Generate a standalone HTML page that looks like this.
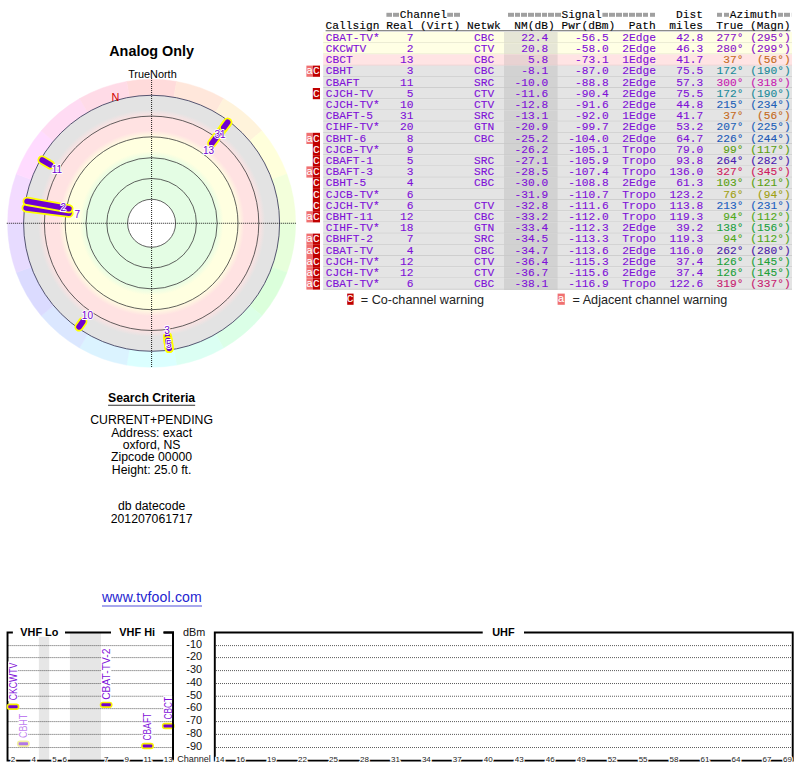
<!DOCTYPE html><html><head><meta charset="utf-8"><style>
html,body{margin:0;padding:0;background:#fff;width:800px;height:768px;overflow:hidden}
#root{position:absolute;left:0;top:0;width:1000px;height:960px;transform:scale(0.8);transform-origin:0 0;font-family:"Liberation Sans",sans-serif}
.a{position:absolute;white-space:pre}
.m{font-family:"Liberation Mono",monospace;font-size:14px;line-height:14px;-webkit-text-stroke:0.15px currentColor}
.c{text-align:center}
</style></head><body><div id="root">
<div class="a m" style="left:407.0px;top:11.3px;color:#000;letter-spacing:0.02px">           Channel                 Signal           Dist    Azimuth  
Callsign Real (Virt) Netwk  NM(dB) Pwr(dBm)  Path  miles  True (Magn)</div><div class="a" style="left:483.48px;top:16.3px;width:16.84px;height:5.2px;background:linear-gradient(to bottom,transparent 42%,rgba(255,255,255,.55) 42% 58%,transparent 58%),repeating-linear-gradient(to right,#a0a0a0 0 7.1px,transparent 7.1px 8.42px)"></div><div class="a" style="left:559.26px;top:16.3px;width:16.84px;height:5.2px;background:linear-gradient(to bottom,transparent 42%,rgba(255,255,255,.55) 42% 58%,transparent 58%),repeating-linear-gradient(to right,#a0a0a0 0 7.1px,transparent 7.1px 8.42px)"></div><div class="a" style="left:635.04px;top:16.3px;width:67.36px;height:5.2px;background:linear-gradient(to bottom,transparent 42%,rgba(255,255,255,.55) 42% 58%,transparent 58%),repeating-linear-gradient(to right,#a0a0a0 0 7.1px,transparent 7.1px 8.42px)"></div><div class="a" style="left:752.92px;top:16.3px;width:67.36px;height:5.2px;background:linear-gradient(to bottom,transparent 42%,rgba(255,255,255,.55) 42% 58%,transparent 58%),repeating-linear-gradient(to right,#a0a0a0 0 7.1px,transparent 7.1px 8.42px)"></div><div class="a" style="left:896.06px;top:16.3px;width:16.84px;height:5.2px;background:linear-gradient(to bottom,transparent 42%,rgba(255,255,255,.55) 42% 58%,transparent 58%),repeating-linear-gradient(to right,#a0a0a0 0 7.1px,transparent 7.1px 8.42px)"></div><div class="a" style="left:971.84px;top:16.3px;width:16.84px;height:5.2px;background:linear-gradient(to bottom,transparent 42%,rgba(255,255,255,.55) 42% 58%,transparent 58%),repeating-linear-gradient(to right,#a0a0a0 0 7.1px,transparent 7.1px 8.42px)"></div><div class="a" style="left:407px;top:37.6px;width:581px;height:1px;background:#404040"></div><div class="a" style="left:404.4px;top:40px;width:585.7px;height:13px;background:#ffffe4;border-bottom:1px solid #e0e0c8"></div><div class="a" style="left:630.1px;top:40px;width:67.1px;height:13px;background:#e6e6d6;border-bottom:1px solid #e0e0c8"></div><div class="a m" style="left:407.3px;top:40.4px;color:#7f10d8;letter-spacing:0.02px">CBAT-TV*    7         CBC    22.4    -56.5  2Edge   42.8  <span style="color:#8a10c8">277° (295°)</span></div><div class="a" style="left:404.4px;top:54px;width:585.7px;height:13px;background:#ffffe4;border-bottom:1px solid #e0e0c8"></div><div class="a" style="left:630.1px;top:54px;width:67.1px;height:13px;background:#e6e6d6;border-bottom:1px solid #e0e0c8"></div><div class="a m" style="left:407.3px;top:54.4px;color:#7f10d8;letter-spacing:0.02px">CKCWTV      2         CTV    20.8    -58.0  2Edge   46.3  <span style="color:#8a10c8">280° (299°)</span></div><div class="a" style="left:404.4px;top:68px;width:585.7px;height:13px;background:#ffe4e4;border-bottom:1px solid #e6c8c8"></div><div class="a" style="left:630.1px;top:68px;width:67.1px;height:13px;background:#e8d2d2;border-bottom:1px solid #e6c8c8"></div><div class="a m" style="left:407.3px;top:68.4px;color:#7f10d8;letter-spacing:0.02px">CBCT       13         CBC     5.8    -73.1  1Edge   41.7  <span style="color:#c46a20"> 37°  (56°)</span></div><div class="a" style="left:404.4px;top:82px;width:585.7px;height:13px;background:#e4e4e4;border-bottom:1px solid #c8c8c8"></div><div class="a" style="left:630.1px;top:82px;width:67.1px;height:13px;background:#d2d2d2;border-bottom:1px solid #c8c8c8"></div><div class="a m" style="left:407.3px;top:82.4px;color:#7f10d8;letter-spacing:0.02px">CBHT        3         CBC    -8.1    -87.0  2Edge   75.5  <span style="color:#1a8a9a">172° (190°)</span></div><div class="a m" style="left:382.8px;top:82px;width:8.3px;height:14px;background:#f07070;color:#fff;text-align:center">a</div><div class="a m" style="left:391.1px;top:82px;width:8.8px;height:14px;background:#c00000;color:#fff;text-align:center">C</div><div class="a" style="left:404.4px;top:96px;width:585.7px;height:13px;background:#e4e4e4;border-bottom:1px solid #c8c8c8"></div><div class="a" style="left:630.1px;top:96px;width:67.1px;height:13px;background:#d2d2d2;border-bottom:1px solid #c8c8c8"></div><div class="a m" style="left:407.3px;top:96.4px;color:#7f10d8;letter-spacing:0.02px">CBAFT      11         SRC   -10.0    -88.8  2Edge   57.3  <span style="color:#c81ab0">300° (318°)</span></div><div class="a" style="left:404.4px;top:110px;width:585.7px;height:13px;background:#e4e4e4;border-bottom:1px solid #c8c8c8"></div><div class="a" style="left:630.1px;top:110px;width:67.1px;height:13px;background:#d2d2d2;border-bottom:1px solid #c8c8c8"></div><div class="a m" style="left:407.3px;top:110.4px;color:#7f10d8;letter-spacing:0.02px">CJCH-TV     5         CTV   -11.6    -90.4  2Edge   75.5  <span style="color:#1a8a9a">172° (190°)</span></div><div class="a m" style="left:391.1px;top:110px;width:8.8px;height:14px;background:#c00000;color:#fff;text-align:center">C</div><div class="a" style="left:404.4px;top:124px;width:585.7px;height:13px;background:#e4e4e4;border-bottom:1px solid #c8c8c8"></div><div class="a" style="left:630.1px;top:124px;width:67.1px;height:13px;background:#d2d2d2;border-bottom:1px solid #c8c8c8"></div><div class="a m" style="left:407.3px;top:124.4px;color:#7f10d8;letter-spacing:0.02px">CJCH-TV*   10         CTV   -12.8    -91.6  2Edge   44.8  <span style="color:#2060b8">215° (234°)</span></div><div class="a" style="left:404.4px;top:138px;width:585.7px;height:13px;background:#e4e4e4;border-bottom:1px solid #c8c8c8"></div><div class="a" style="left:630.1px;top:138px;width:67.1px;height:13px;background:#d2d2d2;border-bottom:1px solid #c8c8c8"></div><div class="a m" style="left:407.3px;top:138.4px;color:#7f10d8;letter-spacing:0.02px">CBAFT-5    31         SRC   -13.1    -92.0  1Edge   41.7  <span style="color:#c46a20"> 37°  (56°)</span></div><div class="a" style="left:404.4px;top:152px;width:585.7px;height:13px;background:#e4e4e4;border-bottom:1px solid #c8c8c8"></div><div class="a" style="left:630.1px;top:152px;width:67.1px;height:13px;background:#d2d2d2;border-bottom:1px solid #c8c8c8"></div><div class="a m" style="left:407.3px;top:152.4px;color:#7f10d8;letter-spacing:0.02px">CIHF-TV*   20         GTN   -20.9    -99.7  2Edge   53.2  <span style="color:#2060b8">207° (225°)</span></div><div class="a" style="left:404.4px;top:166px;width:585.7px;height:13px;background:#e4e4e4;border-bottom:1px solid #c8c8c8"></div><div class="a" style="left:630.1px;top:166px;width:67.1px;height:13px;background:#d2d2d2;border-bottom:1px solid #c8c8c8"></div><div class="a m" style="left:407.3px;top:166.4px;color:#7f10d8;letter-spacing:0.02px">CBHT-6      8         CBC   -25.2   -104.0  2Edge   64.7  <span style="color:#2058b8">226° (244°)</span></div><div class="a m" style="left:382.8px;top:166px;width:8.3px;height:14px;background:#f07070;color:#fff;text-align:center">a</div><div class="a m" style="left:391.1px;top:166px;width:8.8px;height:14px;background:#c00000;color:#fff;text-align:center">C</div><div class="a" style="left:404.4px;top:180px;width:585.7px;height:13px;background:#e4e4e4;border-bottom:1px solid #c8c8c8"></div><div class="a" style="left:630.1px;top:180px;width:67.1px;height:13px;background:#d2d2d2;border-bottom:1px solid #c8c8c8"></div><div class="a m" style="left:407.3px;top:180.4px;color:#7f10d8;letter-spacing:0.02px">CJCB-TV*    9               -26.2   -105.1  Tropo   79.0  <span style="color:#5aa010"> 99° (117°)</span></div><div class="a m" style="left:391.1px;top:180px;width:8.8px;height:14px;background:#c00000;color:#fff;text-align:center">C</div><div class="a" style="left:404.4px;top:194px;width:585.7px;height:13px;background:#e4e4e4;border-bottom:1px solid #c8c8c8"></div><div class="a" style="left:630.1px;top:194px;width:67.1px;height:13px;background:#d2d2d2;border-bottom:1px solid #c8c8c8"></div><div class="a m" style="left:407.3px;top:194.4px;color:#7f10d8;letter-spacing:0.02px">CBAFT-1     5         SRC   -27.1   -105.9  Tropo   93.8  <span style="color:#4a20b0">264° (282°)</span></div><div class="a m" style="left:391.1px;top:194px;width:8.8px;height:14px;background:#c00000;color:#fff;text-align:center">C</div><div class="a" style="left:404.4px;top:208px;width:585.7px;height:13px;background:#e4e4e4;border-bottom:1px solid #c8c8c8"></div><div class="a" style="left:630.1px;top:208px;width:67.1px;height:13px;background:#d2d2d2;border-bottom:1px solid #c8c8c8"></div><div class="a m" style="left:407.3px;top:208.4px;color:#7f10d8;letter-spacing:0.02px">CBAFT-3     3         SRC   -28.5   -107.4  Tropo  136.0  <span style="color:#d01a60">327° (345°)</span></div><div class="a m" style="left:382.8px;top:208px;width:8.3px;height:14px;background:#f07070;color:#fff;text-align:center">a</div><div class="a m" style="left:391.1px;top:208px;width:8.8px;height:14px;background:#c00000;color:#fff;text-align:center">C</div><div class="a" style="left:404.4px;top:222px;width:585.7px;height:13px;background:#e4e4e4;border-bottom:1px solid #c8c8c8"></div><div class="a" style="left:630.1px;top:222px;width:67.1px;height:13px;background:#d2d2d2;border-bottom:1px solid #c8c8c8"></div><div class="a m" style="left:407.3px;top:222.4px;color:#7f10d8;letter-spacing:0.02px">CBHT-5      4         CBC   -30.0   -108.8  2Edge   61.3  <span style="color:#5aa010">103° (121°)</span></div><div class="a m" style="left:391.1px;top:222px;width:8.8px;height:14px;background:#c00000;color:#fff;text-align:center">C</div><div class="a" style="left:404.4px;top:236px;width:585.7px;height:13px;background:#e4e4e4;border-bottom:1px solid #c8c8c8"></div><div class="a" style="left:630.1px;top:236px;width:67.1px;height:13px;background:#d2d2d2;border-bottom:1px solid #c8c8c8"></div><div class="a m" style="left:407.3px;top:236.4px;color:#7f10d8;letter-spacing:0.02px">CJCB-TV*    6               -31.9   -110.7  Tropo  123.2  <span style="color:#a0a010"> 76°  (94°)</span></div><div class="a m" style="left:391.1px;top:236px;width:8.8px;height:14px;background:#c00000;color:#fff;text-align:center">C</div><div class="a" style="left:404.4px;top:250px;width:585.7px;height:13px;background:#e4e4e4;border-bottom:1px solid #c8c8c8"></div><div class="a" style="left:630.1px;top:250px;width:67.1px;height:13px;background:#d2d2d2;border-bottom:1px solid #c8c8c8"></div><div class="a m" style="left:407.3px;top:250.4px;color:#7f10d8;letter-spacing:0.02px">CJCH-TV*    6         CTV   -32.8   -111.6  Tropo  113.8  <span style="color:#2060c0">213° (231°)</span></div><div class="a m" style="left:391.1px;top:250px;width:8.8px;height:14px;background:#c00000;color:#fff;text-align:center">C</div><div class="a" style="left:404.4px;top:264px;width:585.7px;height:13px;background:#e4e4e4;border-bottom:1px solid #c8c8c8"></div><div class="a" style="left:630.1px;top:264px;width:67.1px;height:13px;background:#d2d2d2;border-bottom:1px solid #c8c8c8"></div><div class="a m" style="left:407.3px;top:264.4px;color:#7f10d8;letter-spacing:0.02px">CBHT-11    12         CBC   -33.2   -112.0  Tropo  119.3  <span style="color:#50a818"> 94° (112°)</span></div><div class="a m" style="left:382.8px;top:264px;width:8.3px;height:14px;background:#f07070;color:#fff;text-align:center">a</div><div class="a m" style="left:391.1px;top:264px;width:8.8px;height:14px;background:#c00000;color:#fff;text-align:center">C</div><div class="a" style="left:404.4px;top:278px;width:585.7px;height:13px;background:#e4e4e4;border-bottom:1px solid #c8c8c8"></div><div class="a" style="left:630.1px;top:278px;width:67.1px;height:13px;background:#d2d2d2;border-bottom:1px solid #c8c8c8"></div><div class="a m" style="left:407.3px;top:278.4px;color:#7f10d8;letter-spacing:0.02px">CIHF-TV*   18         GTN   -33.4   -112.3  2Edge   39.2  <span style="color:#20a040">138° (156°)</span></div><div class="a" style="left:404.4px;top:292px;width:585.7px;height:13px;background:#e4e4e4;border-bottom:1px solid #c8c8c8"></div><div class="a" style="left:630.1px;top:292px;width:67.1px;height:13px;background:#d2d2d2;border-bottom:1px solid #c8c8c8"></div><div class="a m" style="left:407.3px;top:292.4px;color:#7f10d8;letter-spacing:0.02px">CBHFT-2     7         SRC   -34.5   -113.3  Tropo  119.3  <span style="color:#50a818"> 94° (112°)</span></div><div class="a m" style="left:382.8px;top:292px;width:8.3px;height:14px;background:#f07070;color:#fff;text-align:center">a</div><div class="a m" style="left:391.1px;top:292px;width:8.8px;height:14px;background:#c00000;color:#fff;text-align:center">C</div><div class="a" style="left:404.4px;top:306px;width:585.7px;height:13px;background:#e4e4e4;border-bottom:1px solid #c8c8c8"></div><div class="a" style="left:630.1px;top:306px;width:67.1px;height:13px;background:#d2d2d2;border-bottom:1px solid #c8c8c8"></div><div class="a m" style="left:407.3px;top:306.4px;color:#7f10d8;letter-spacing:0.02px">CBAT-TV     4         CBC   -34.7   -113.6  2Edge  116.0  <span style="color:#4a20a8">262° (280°)</span></div><div class="a m" style="left:382.8px;top:306px;width:8.3px;height:14px;background:#f07070;color:#fff;text-align:center">a</div><div class="a m" style="left:391.1px;top:306px;width:8.8px;height:14px;background:#c00000;color:#fff;text-align:center">C</div><div class="a" style="left:404.4px;top:320px;width:585.7px;height:13px;background:#e4e4e4;border-bottom:1px solid #c8c8c8"></div><div class="a" style="left:630.1px;top:320px;width:67.1px;height:13px;background:#d2d2d2;border-bottom:1px solid #c8c8c8"></div><div class="a m" style="left:407.3px;top:320.4px;color:#7f10d8;letter-spacing:0.02px">CJCH-TV*   12         CTV   -36.4   -115.3  2Edge   37.4  <span style="color:#20a038">126° (145°)</span></div><div class="a m" style="left:382.8px;top:320px;width:8.3px;height:14px;background:#f07070;color:#fff;text-align:center">a</div><div class="a m" style="left:391.1px;top:320px;width:8.8px;height:14px;background:#c00000;color:#fff;text-align:center">C</div><div class="a" style="left:404.4px;top:334px;width:585.7px;height:13px;background:#e4e4e4;border-bottom:1px solid #c8c8c8"></div><div class="a" style="left:630.1px;top:334px;width:67.1px;height:13px;background:#d2d2d2;border-bottom:1px solid #c8c8c8"></div><div class="a m" style="left:407.3px;top:334.4px;color:#7f10d8;letter-spacing:0.02px">CJCH-TV*   12         CTV   -36.7   -115.6  2Edge   37.4  <span style="color:#20a038">126° (145°)</span></div><div class="a m" style="left:382.8px;top:334px;width:8.3px;height:14px;background:#f07070;color:#fff;text-align:center">a</div><div class="a m" style="left:391.1px;top:334px;width:8.8px;height:14px;background:#c00000;color:#fff;text-align:center">C</div><div class="a" style="left:404.4px;top:348px;width:585.7px;height:13px;background:#e4e4e4;border-bottom:1px solid #c8c8c8"></div><div class="a" style="left:630.1px;top:348px;width:67.1px;height:13px;background:#d2d2d2;border-bottom:1px solid #c8c8c8"></div><div class="a m" style="left:407.3px;top:348.4px;color:#7f10d8;letter-spacing:0.02px">CBAT-TV*    6         CBC   -38.1   -116.9  Tropo  122.6  <span style="color:#c81a70">319° (337°)</span></div><div class="a m" style="left:382.8px;top:348px;width:8.3px;height:14px;background:#f07070;color:#fff;text-align:center">a</div><div class="a m" style="left:391.1px;top:348px;width:8.8px;height:14px;background:#c00000;color:#fff;text-align:center">C</div><div class="a m" style="left:433.5px;top:366.8px;width:8.4px;height:14px;background:#c00000;color:#fff;text-align:center">C</div><div class="a" style="left:451px;top:365.8px;font-size:15.8px;line-height:18px;color:#222">= Co-channel warning</div><div class="a m" style="left:697px;top:366.8px;width:9px;height:14px;background:#f07070;color:#fff;text-align:center">a</div><div class="a" style="left:715.6px;top:365.8px;font-size:15.8px;line-height:18px;color:#222">= Adjacent channel warning</div><div class="a c" style="left:-10.5px;width:400px;top:53.51px;font-size:18px;line-height:20.7px;font-weight:bold;">Analog Only</div><div class="a c" style="left:-9.5px;width:400px;top:84.72px;font-size:13.6px;line-height:15.639999999999999px;">TrueNorth</div><div class="a c" style="left:-10.5px;width:400px;top:488.30px;font-size:15.3px;line-height:17.595px;font-weight:bold;"><u style="text-decoration-thickness:1.3px;text-underline-offset:3.5px">Search Criteria</u></div><div class="a c" style="left:-10.5px;width:400px;top:516.40px;font-size:15.3px;line-height:17.595px;">CURRENT+PENDING</div><div class="a c" style="left:-10.5px;width:400px;top:532.15px;font-size:15.3px;line-height:17.595px;">Address: exact</div><div class="a c" style="left:-10.5px;width:400px;top:547.30px;font-size:15.3px;line-height:17.595px;">oxford, NS</div><div class="a c" style="left:-10.5px;width:400px;top:562.20px;font-size:15.3px;line-height:17.595px;">Zipcode 00000</div><div class="a c" style="left:-10.5px;width:400px;top:578.40px;font-size:15.3px;line-height:17.595px;">Height: 25.0 ft.</div><div class="a c" style="left:-10.5px;width:400px;top:623.50px;font-size:15.3px;line-height:17.595px;">db datecode</div><div class="a c" style="left:-10.5px;width:400px;top:639.70px;font-size:15.3px;line-height:17.595px;">201207061717</div><div class="a c" style="left:-10px;width:400px;top:736.78px;font-size:17.6px;line-height:20.24px;color:#2424d0;letter-spacing:0.2px;"><u style="text-underline-offset:3.5px">www.tvfool.com</u></div><svg class="a" style="left:0;top:0" width="380" height="480" viewBox="0 0 380 480"><defs><radialGradient id="bands" gradientUnits="userSpaceOnUse" cx="189.5" cy="279.1" r="160"><stop offset="0.0000" stop-color="#ffffff"/><stop offset="0.1875" stop-color="#ffffff"/><stop offset="0.1876" stop-color="#e4fde4"/><stop offset="0.5062" stop-color="#e4fde4"/><stop offset="0.5625" stop-color="#ffffe0"/><stop offset="0.6687" stop-color="#ffffe0"/><stop offset="0.7250" stop-color="#ffe2e2"/><stop offset="0.8313" stop-color="#ffe2e2"/><stop offset="0.8875" stop-color="#e3e3e3"/><stop offset="1.0000" stop-color="#e3e3e3"/></radialGradient></defs><path d="M158.24,101.83 A180,180 0 0 1 220.76,101.83 L217.20,122.02 A159.5,159.5 0 0 0 161.80,122.02Z" fill="hsl(0,100%,93%)" stroke="hsl(0,100%,93%)" stroke-width="0.6"/><path d="M220.76,101.83 A180,180 0 0 1 279.50,123.22 L269.25,140.97 A159.5,159.5 0 0 0 217.20,122.02Z" fill="hsl(20,100%,93%)" stroke="hsl(20,100%,93%)" stroke-width="0.6"/><path d="M279.50,123.22 A180,180 0 0 1 327.39,163.40 L311.68,176.58 A159.5,159.5 0 0 0 269.25,140.97Z" fill="hsl(40,100%,93%)" stroke="hsl(40,100%,93%)" stroke-width="0.6"/><path d="M327.39,163.40 A180,180 0 0 1 358.64,217.54 L339.38,224.55 A159.5,159.5 0 0 0 311.68,176.58Z" fill="hsl(60,100%,93%)" stroke="hsl(60,100%,93%)" stroke-width="0.6"/><path d="M358.64,217.54 A180,180 0 0 1 369.50,279.10 L349.00,279.10 A159.5,159.5 0 0 0 339.38,224.55Z" fill="hsl(80,100%,93%)" stroke="hsl(80,100%,93%)" stroke-width="0.6"/><path d="M369.50,279.10 A180,180 0 0 1 358.64,340.66 L339.38,333.65 A159.5,159.5 0 0 0 349.00,279.10Z" fill="hsl(100,100%,93%)" stroke="hsl(100,100%,93%)" stroke-width="0.6"/><path d="M358.64,340.66 A180,180 0 0 1 327.39,394.80 L311.68,381.62 A159.5,159.5 0 0 0 339.38,333.65Z" fill="hsl(120,100%,93%)" stroke="hsl(120,100%,93%)" stroke-width="0.6"/><path d="M327.39,394.80 A180,180 0 0 1 279.50,434.98 L269.25,417.23 A159.5,159.5 0 0 0 311.68,381.62Z" fill="hsl(140,100%,93%)" stroke="hsl(140,100%,93%)" stroke-width="0.6"/><path d="M279.50,434.98 A180,180 0 0 1 220.76,456.37 L217.20,436.18 A159.5,159.5 0 0 0 269.25,417.23Z" fill="hsl(160,100%,93%)" stroke="hsl(160,100%,93%)" stroke-width="0.6"/><path d="M220.76,456.37 A180,180 0 0 1 158.24,456.37 L161.80,436.18 A159.5,159.5 0 0 0 217.20,436.18Z" fill="hsl(180,100%,93%)" stroke="hsl(180,100%,93%)" stroke-width="0.6"/><path d="M158.24,456.37 A180,180 0 0 1 99.50,434.98 L109.75,417.23 A159.5,159.5 0 0 0 161.80,436.18Z" fill="hsl(200,100%,93%)" stroke="hsl(200,100%,93%)" stroke-width="0.6"/><path d="M99.50,434.98 A180,180 0 0 1 51.61,394.80 L67.32,381.62 A159.5,159.5 0 0 0 109.75,417.23Z" fill="hsl(220,100%,93%)" stroke="hsl(220,100%,93%)" stroke-width="0.6"/><path d="M51.61,394.80 A180,180 0 0 1 20.36,340.66 L39.62,333.65 A159.5,159.5 0 0 0 67.32,381.62Z" fill="hsl(240,100%,93%)" stroke="hsl(240,100%,93%)" stroke-width="0.6"/><path d="M20.36,340.66 A180,180 0 0 1 9.50,279.10 L30.00,279.10 A159.5,159.5 0 0 0 39.62,333.65Z" fill="hsl(260,100%,93%)" stroke="hsl(260,100%,93%)" stroke-width="0.6"/><path d="M9.50,279.10 A180,180 0 0 1 20.36,217.54 L39.62,224.55 A159.5,159.5 0 0 0 30.00,279.10Z" fill="hsl(280,100%,93%)" stroke="hsl(280,100%,93%)" stroke-width="0.6"/><path d="M20.36,217.54 A180,180 0 0 1 51.61,163.40 L67.32,176.58 A159.5,159.5 0 0 0 39.62,224.55Z" fill="hsl(300,100%,93%)" stroke="hsl(300,100%,93%)" stroke-width="0.6"/><path d="M51.61,163.40 A180,180 0 0 1 99.50,123.22 L109.75,140.97 A159.5,159.5 0 0 0 67.32,176.58Z" fill="hsl(320,100%,93%)" stroke="hsl(320,100%,93%)" stroke-width="0.6"/><path d="M99.50,123.22 A180,180 0 0 1 158.24,101.83 L161.80,122.02 A159.5,159.5 0 0 0 109.75,140.97Z" fill="hsl(340,100%,93%)" stroke="hsl(340,100%,93%)" stroke-width="0.6"/><circle cx="189.5" cy="279.1" r="160" fill="url(#bands)"/><circle cx="189.5" cy="279.1" r="30" fill="none" stroke="#3a3a3a" stroke-width="1"/><circle cx="189.5" cy="279.1" r="56" fill="none" stroke="#3a3a3a" stroke-width="1"/><circle cx="189.5" cy="279.1" r="82" fill="none" stroke="#3a3a3a" stroke-width="1"/><circle cx="189.5" cy="279.1" r="108" fill="none" stroke="#3a3a3a" stroke-width="1"/><circle cx="189.5" cy="279.1" r="134" fill="none" stroke="#3a3a3a" stroke-width="1"/><circle cx="189.5" cy="279.1" r="160" fill="none" stroke="#404060" stroke-width="1.1"/><line x1="8.5" y1="279.1" x2="370" y2="279.1" stroke="#000" stroke-width="1.1" stroke-dasharray="1.25 1.25"/><line x1="189.5" y1="97.5" x2="189.5" y2="459" stroke="#000" stroke-width="1.1" stroke-dasharray="1.25 1.25"/><text x="144.4" y="126" font-size="13.6" fill="#d00000" text-anchor="middle" font-family="Liberation Sans">N</text><line x1="32.68" y1="259.84" x2="86.28" y2="266.43" stroke="#ffff00" stroke-width="11.6" stroke-linecap="round"/><line x1="32.68" y1="259.84" x2="86.28" y2="266.43" stroke="#7000d0" stroke-width="7.1" stroke-linecap="round"/><line x1="33.90" y1="251.66" x2="86.10" y2="260.87" stroke="#ffff00" stroke-width="11.6" stroke-linecap="round"/><line x1="33.90" y1="251.66" x2="86.10" y2="260.87" stroke="#7000d0" stroke-width="7.1" stroke-linecap="round"/><line x1="284.59" y1="152.92" x2="264.73" y2="179.27" stroke="#ffff00" stroke-width="11.6" stroke-linecap="round"/><line x1="284.59" y1="152.92" x2="264.73" y2="179.27" stroke="#7000d0" stroke-width="7.1" stroke-linecap="round"/><line x1="211.49" y1="435.56" x2="209.40" y2="420.71" stroke="#ffff00" stroke-width="11.6" stroke-linecap="round"/><line x1="211.49" y1="435.56" x2="209.40" y2="420.71" stroke="#7000d0" stroke-width="7.1" stroke-linecap="round"/><line x1="52.67" y1="200.10" x2="63.06" y2="206.10" stroke="#ffff00" stroke-width="11.6" stroke-linecap="round"/><line x1="52.67" y1="200.10" x2="63.06" y2="206.10" stroke="#7000d0" stroke-width="7.1" stroke-linecap="round"/><line x1="211.49" y1="435.56" x2="210.10" y2="425.66" stroke="#ffff00" stroke-width="11.6" stroke-linecap="round"/><line x1="211.49" y1="435.56" x2="210.10" y2="425.66" stroke="#7000d0" stroke-width="7.1" stroke-linecap="round"/><line x1="98.87" y1="408.53" x2="103.46" y2="401.97" stroke="#ffff00" stroke-width="11.6" stroke-linecap="round"/><line x1="98.87" y1="408.53" x2="103.46" y2="401.97" stroke="#7000d0" stroke-width="7.1" stroke-linecap="round"/><line x1="284.59" y1="152.92" x2="279.77" y2="159.30" stroke="#ffff00" stroke-width="11.6" stroke-linecap="round"/><line x1="284.59" y1="152.92" x2="279.77" y2="159.30" stroke="#7000d0" stroke-width="7.1" stroke-linecap="round"/><text x="275" y="172.0" font-size="12.5" fill="#7000d0" text-anchor="middle" font-family="Liberation Sans" stroke="#fff" stroke-width="2.2" paint-order="stroke" stroke-linejoin="round">31</text><text x="260.75" y="192.0" font-size="12.5" fill="#7000d0" text-anchor="middle" font-family="Liberation Sans" stroke="#fff" stroke-width="2.2" paint-order="stroke" stroke-linejoin="round">13</text><text x="71.25" y="215.8" font-size="12.5" fill="#7000d0" text-anchor="middle" font-family="Liberation Sans" stroke="#fff" stroke-width="2.2" paint-order="stroke" stroke-linejoin="round">11</text><text x="79.1" y="263.5" font-size="12.5" fill="#7000d0" text-anchor="middle" font-family="Liberation Sans" stroke="#fff" stroke-width="2.2" paint-order="stroke" stroke-linejoin="round">2</text><text x="96.75" y="272.3" font-size="12.5" fill="#7000d0" text-anchor="middle" font-family="Liberation Sans" stroke="#fff" stroke-width="2.2" paint-order="stroke" stroke-linejoin="round">7</text><text x="109.25" y="398.4" font-size="12.5" fill="#7000d0" text-anchor="middle" font-family="Liberation Sans" stroke="#fff" stroke-width="2.2" paint-order="stroke" stroke-linejoin="round">10</text><text x="208.75" y="417.0" font-size="12.5" fill="#7000d0" text-anchor="middle" font-family="Liberation Sans" stroke="#fff" stroke-width="2.2" paint-order="stroke" stroke-linejoin="round">3</text><text x="210.9" y="435.6" font-size="12.5" fill="#7000d0" text-anchor="middle" font-family="Liberation Sans" stroke="#fff" stroke-width="2.2" paint-order="stroke" stroke-linejoin="round">5</text></svg><svg class="a" style="left:0;top:770px" width="1000" height="190" viewBox="0 770 1000 190" font-family="Liberation Sans"><rect x="48.57" y="796" width="12.94" height="154" fill="#e6e6e6"/><rect x="87.39" y="791" width="38.82" height="159" fill="#e6e6e6"/><line x1="10.5" y1="807.00" x2="215" y2="807.00" stroke="#444" stroke-width="1.1" stroke-dasharray="1.25 1.25"/><line x1="270" y1="807.00" x2="990" y2="807.00" stroke="#444" stroke-width="1.1" stroke-dasharray="1.25 1.25"/><text x="252.5" y="810.40" font-size="13.6" text-anchor="end" fill="#111">-10</text><line x1="10.5" y1="822.00" x2="215" y2="822.00" stroke="#444" stroke-width="1.1" stroke-dasharray="1.25 1.25"/><line x1="270" y1="822.00" x2="990" y2="822.00" stroke="#444" stroke-width="1.1" stroke-dasharray="1.25 1.25"/><text x="252.5" y="825.40" font-size="13.6" text-anchor="end" fill="#111">-20</text><line x1="10.5" y1="838.25" x2="215" y2="838.25" stroke="#444" stroke-width="1.1" stroke-dasharray="1.25 1.25"/><line x1="270" y1="838.25" x2="990" y2="838.25" stroke="#444" stroke-width="1.1" stroke-dasharray="1.25 1.25"/><text x="252.5" y="841.65" font-size="13.6" text-anchor="end" fill="#111">-30</text><line x1="10.5" y1="854.40" x2="215" y2="854.40" stroke="#444" stroke-width="1.1" stroke-dasharray="1.25 1.25"/><line x1="270" y1="854.40" x2="990" y2="854.40" stroke="#444" stroke-width="1.1" stroke-dasharray="1.25 1.25"/><text x="252.5" y="857.80" font-size="13.6" text-anchor="end" fill="#111">-40</text><line x1="10.5" y1="870.30" x2="215" y2="870.30" stroke="#444" stroke-width="1.1" stroke-dasharray="1.25 1.25"/><line x1="270" y1="870.30" x2="990" y2="870.30" stroke="#444" stroke-width="1.1" stroke-dasharray="1.25 1.25"/><text x="252.5" y="873.70" font-size="13.6" text-anchor="end" fill="#111">-50</text><line x1="10.5" y1="885.80" x2="215" y2="885.80" stroke="#444" stroke-width="1.1" stroke-dasharray="1.25 1.25"/><line x1="270" y1="885.80" x2="990" y2="885.80" stroke="#444" stroke-width="1.1" stroke-dasharray="1.25 1.25"/><text x="252.5" y="889.20" font-size="13.6" text-anchor="end" fill="#111">-60</text><line x1="10.5" y1="902.00" x2="215" y2="902.00" stroke="#444" stroke-width="1.1" stroke-dasharray="1.25 1.25"/><line x1="270" y1="902.00" x2="990" y2="902.00" stroke="#444" stroke-width="1.1" stroke-dasharray="1.25 1.25"/><text x="252.5" y="905.40" font-size="13.6" text-anchor="end" fill="#111">-70</text><line x1="10.5" y1="918.00" x2="215" y2="918.00" stroke="#444" stroke-width="1.1" stroke-dasharray="1.25 1.25"/><line x1="270" y1="918.00" x2="990" y2="918.00" stroke="#444" stroke-width="1.1" stroke-dasharray="1.25 1.25"/><text x="252.5" y="921.40" font-size="13.6" text-anchor="end" fill="#111">-80</text><line x1="10.5" y1="934.40" x2="215" y2="934.40" stroke="#444" stroke-width="1.1" stroke-dasharray="1.25 1.25"/><line x1="270" y1="934.40" x2="990" y2="934.40" stroke="#444" stroke-width="1.1" stroke-dasharray="1.25 1.25"/><text x="252.5" y="937.80" font-size="13.6" text-anchor="end" fill="#111">-90</text><text x="242.6" y="794.7" font-size="13.5" text-anchor="middle" fill="#111">dBm</text><path d="M16.1,790.6 H9.4 V950.8 H216.3 V790.6 H204.4" fill="none" stroke="#000" stroke-width="2.4"/><line x1="81.25" y1="790.6" x2="138.75" y2="790.6" stroke="#000" stroke-width="2.4"/><text x="49.2" y="795.5" font-size="13.6" font-weight="bold" text-anchor="middle">VHF Lo</text><text x="171.5" y="795.5" font-size="13.6" font-weight="bold" text-anchor="middle">VHF Hi</text><path d="M603.4,790.6 H268.5 V950.8 H990.9 V790.6 H655" fill="none" stroke="#000" stroke-width="2.4"/><text x="629.2" y="795.5" font-size="13.6" font-weight="bold" text-anchor="middle">UHF</text><text x="16.22" y="952.5" font-size="10" text-anchor="middle" fill="#222" stroke="#fff" stroke-width="3" paint-order="stroke">2</text><text x="42.10" y="952.5" font-size="10" text-anchor="middle" fill="#222" stroke="#fff" stroke-width="3" paint-order="stroke">4</text><text x="67.98" y="952.5" font-size="10" text-anchor="middle" fill="#222" stroke="#fff" stroke-width="3" paint-order="stroke">5</text><text x="80.92" y="952.5" font-size="10" text-anchor="middle" fill="#222" stroke="#fff" stroke-width="3" paint-order="stroke">6</text><text x="132.68" y="952.5" font-size="10" text-anchor="middle" fill="#222" stroke="#fff" stroke-width="3" paint-order="stroke">7</text><text x="158.56" y="952.5" font-size="10" text-anchor="middle" fill="#222" stroke="#fff" stroke-width="3" paint-order="stroke">9</text><text x="184.44" y="952.5" font-size="10" text-anchor="middle" fill="#222" stroke="#fff" stroke-width="3" paint-order="stroke">11</text><text x="210.32" y="952.5" font-size="10" text-anchor="middle" fill="#222" stroke="#fff" stroke-width="3" paint-order="stroke">13</text><text x="242.5" y="952" font-size="11.3" text-anchor="middle" fill="#222">Channel</text><text x="274.95" y="952.5" font-size="10" text-anchor="middle" fill="#222" stroke="#fff" stroke-width="3" paint-order="stroke">14</text><text x="300.75" y="952.5" font-size="10" text-anchor="middle" fill="#222" stroke="#fff" stroke-width="3" paint-order="stroke">16</text><text x="339.45" y="952.5" font-size="10" text-anchor="middle" fill="#222" stroke="#fff" stroke-width="3" paint-order="stroke">19</text><text x="378.15" y="952.5" font-size="10" text-anchor="middle" fill="#222" stroke="#fff" stroke-width="3" paint-order="stroke">22</text><text x="416.85" y="952.5" font-size="10" text-anchor="middle" fill="#222" stroke="#fff" stroke-width="3" paint-order="stroke">25</text><text x="455.55" y="952.5" font-size="10" text-anchor="middle" fill="#222" stroke="#fff" stroke-width="3" paint-order="stroke">28</text><text x="494.25" y="952.5" font-size="10" text-anchor="middle" fill="#222" stroke="#fff" stroke-width="3" paint-order="stroke">31</text><text x="532.95" y="952.5" font-size="10" text-anchor="middle" fill="#222" stroke="#fff" stroke-width="3" paint-order="stroke">34</text><text x="571.65" y="952.5" font-size="10" text-anchor="middle" fill="#222" stroke="#fff" stroke-width="3" paint-order="stroke">37</text><text x="610.35" y="952.5" font-size="10" text-anchor="middle" fill="#222" stroke="#fff" stroke-width="3" paint-order="stroke">40</text><text x="649.05" y="952.5" font-size="10" text-anchor="middle" fill="#222" stroke="#fff" stroke-width="3" paint-order="stroke">43</text><text x="687.75" y="952.5" font-size="10" text-anchor="middle" fill="#222" stroke="#fff" stroke-width="3" paint-order="stroke">46</text><text x="726.45" y="952.5" font-size="10" text-anchor="middle" fill="#222" stroke="#fff" stroke-width="3" paint-order="stroke">49</text><text x="765.15" y="952.5" font-size="10" text-anchor="middle" fill="#222" stroke="#fff" stroke-width="3" paint-order="stroke">52</text><text x="803.85" y="952.5" font-size="10" text-anchor="middle" fill="#222" stroke="#fff" stroke-width="3" paint-order="stroke">55</text><text x="842.55" y="952.5" font-size="10" text-anchor="middle" fill="#222" stroke="#fff" stroke-width="3" paint-order="stroke">58</text><text x="881.25" y="952.5" font-size="10" text-anchor="middle" fill="#222" stroke="#fff" stroke-width="3" paint-order="stroke">61</text><text x="919.95" y="952.5" font-size="10" text-anchor="middle" fill="#222" stroke="#fff" stroke-width="3" paint-order="stroke">64</text><text x="958.65" y="952.5" font-size="10" text-anchor="middle" fill="#222" stroke="#fff" stroke-width="3" paint-order="stroke">67</text><text x="984.45" y="952.5" font-size="10" text-anchor="middle" fill="#222" stroke="#fff" stroke-width="3" paint-order="stroke">69</text><rect x="8.22" y="879.45" width="16" height="8" rx="4" fill="#f8f000"/><rect x="10.37" y="881.55" width="11.7" height="3.8" rx="1" fill="#7000d0"/><rect x="10.12" y="826.85" width="12.2" height="49.40" fill="#fff"/><text transform="translate(21.02,875.25) rotate(-90)" font-size="13.8" fill="#7f10d8" textLength="46.9" lengthAdjust="spacingAndGlyphs">CKCWTV</text><rect x="21.16" y="925.68" width="16" height="8" rx="4" fill="#f4f0a0"/><rect x="23.31" y="927.78" width="11.7" height="3.8" rx="1" fill="#b078e8"/><rect x="23.06" y="890.68" width="12.2" height="32.90" fill="#fff"/><text transform="translate(33.96,922.58) rotate(-90)" font-size="13.8" fill="#c080f0" textLength="30.4" lengthAdjust="spacingAndGlyphs">CBHT</text><rect x="124.68" y="877.06" width="16" height="8" rx="4" fill="#f8f000"/><rect x="126.83" y="879.16" width="11.7" height="3.8" rx="1" fill="#7000d0"/><rect x="126.58" y="809.26" width="12.2" height="66.50" fill="#fff"/><text transform="translate(137.48,874.76) rotate(-90)" font-size="13.8" fill="#7f10d8" textLength="64" lengthAdjust="spacingAndGlyphs">CBAT-TV-2</text><rect x="176.44" y="928.55" width="16" height="8" rx="4" fill="#f8f000"/><rect x="178.59" y="930.65" width="11.7" height="3.8" rx="1" fill="#7000d0"/><rect x="178.34" y="889.40" width="12.2" height="37.25" fill="#fff"/><text transform="translate(189.24,925.65) rotate(-90)" font-size="13.8" fill="#7f10d8" textLength="34.75" lengthAdjust="spacingAndGlyphs">CBAFT</text><rect x="202.32" y="903.52" width="16" height="8" rx="4" fill="#f8f000"/><rect x="204.47" y="905.62" width="11.7" height="3.8" rx="1" fill="#7000d0"/><rect x="204.22" y="869.82" width="12.2" height="30.40" fill="#fff"/><text transform="translate(215.12,899.22) rotate(-90)" font-size="13.8" fill="#7f10d8" textLength="27.9" lengthAdjust="spacingAndGlyphs">CBCT</text><path d="M216.3,949.6 V790.6 H204.4" fill="none" stroke="#000" stroke-width="2.4"/></svg></div></body></html>
